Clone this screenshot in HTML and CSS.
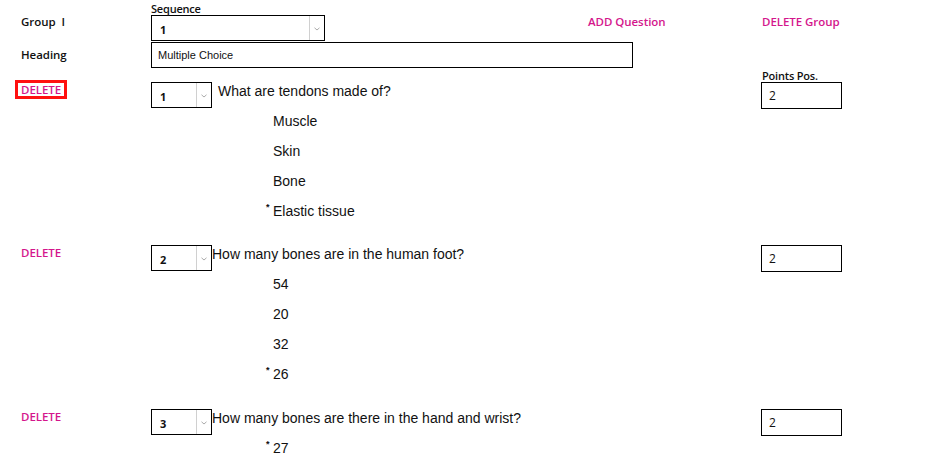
FILE: index.html
```html
<!DOCTYPE html>
<html>
<head>
<meta charset="utf-8">
<link rel="stylesheet" href="styles.css">
</head>
<body>
<div class="page">
  <div class="row row-top">
    <div class="label">Group&nbsp; I</div>
    <div class="seq">
      <div class="small-label">Sequence</div>
      <div class="select select-wide">
        <span class="select-value">1</span>
        <span class="select-arrow"><svg width="6" height="4" viewBox="0 0 6 4"><polyline points="0.5,0.8 3,3 5.5,0.8" fill="none" stroke="#aaa" stroke-width="1"/></svg></span>
      </div>
    </div>
    <div class="label label-col3"><a class="link">ADD Question</a></div>
    <div class="label label-col4"><a class="link">DELETE Group</a></div>
  </div>

  <div class="row row-heading">
    <div class="label">Heading</div>
    <div class="text-input heading-input">Multiple Choice</div>
  </div>

  <div class="row row-points">
    <div class="small-label points-label">Points Pos.</div>
  </div>

  <div class="question q-first">
    <div class="row qhead">
      <div class="del-cell"><a class="del del-focus">DELETE</a></div>
      <div class="qmain">
        <div class="select select-num">
          <span class="select-value">1</span>
          <span class="select-arrow"><svg width="6" height="4" viewBox="0 0 6 4"><polyline points="0.5,0.8 3,3 5.5,0.8" fill="none" stroke="#aaa" stroke-width="1"/></svg></span>
        </div>
        <div class="qtext qtext-gap">What are tendons made of?</div>
      </div>
      <div class="pts-cell"><div class="points-input">2</div></div>
    </div>
    <ul class="answers">
      <li>Muscle</li>
      <li>Skin</li>
      <li>Bone</li>
      <li><span class="mark">*</span>Elastic tissue</li>
    </ul>
  </div>

  <div class="question">
    <div class="row qhead">
      <div class="del-cell"><a class="del">DELETE</a></div>
      <div class="qmain">
        <div class="select select-num">
          <span class="select-value">2</span>
          <span class="select-arrow"><svg width="6" height="4" viewBox="0 0 6 4"><polyline points="0.5,0.8 3,3 5.5,0.8" fill="none" stroke="#aaa" stroke-width="1"/></svg></span>
        </div>
        <div class="qtext">How many bones are in the human foot?</div>
      </div>
      <div class="pts-cell"><div class="points-input">2</div></div>
    </div>
    <ul class="answers">
      <li>54</li>
      <li>20</li>
      <li>32</li>
      <li><span class="mark">*</span>26</li>
    </ul>
  </div>

  <div class="question">
    <div class="row qhead">
      <div class="del-cell"><a class="del">DELETE</a></div>
      <div class="qmain">
        <div class="select select-num">
          <span class="select-value">3</span>
          <span class="select-arrow"><svg width="6" height="4" viewBox="0 0 6 4"><polyline points="0.5,0.8 3,3 5.5,0.8" fill="none" stroke="#aaa" stroke-width="1"/></svg></span>
        </div>
        <div class="qtext">How many bones are there in the hand and wrist?</div>
      </div>
      <div class="pts-cell"><div class="points-input">2</div></div>
    </div>
    <ul class="answers">
      <li><span class="mark">*</span>27</li>
    </ul>
  </div>
</div>
</body>
</html>
```

FILE: styles.css
```css
html, body {
  margin: 0;
  padding: 0;
  background: #fff;
  overflow: hidden;
}

body {
  font-family: "Open Sans", "Liberation Sans", sans-serif;
  color: #111;
}

.page {
  width: 936px;
  height: 460px;
  overflow: hidden;
}

.row {
  display: grid;
  grid-template-columns: 151px 437px 173px 1fr;
  align-items: start;
}

.label {
  padding-left: 21px;
  font-size: 11.5px;
  font-weight: 600;
  line-height: 12px;
  letter-spacing: -0.05px;
}

.label-col3 {
  padding-left: 0;
}

.label-col4 {
  padding-left: 1px;
}

.row-top {
  padding-top: 3px;
}

.row-top > .label {
  margin-top: 13px;
}

.small-label {
  font-size: 11px;
  font-weight: 600;
  line-height: 12px;
  letter-spacing: -0.2px;
}

.link {
  color: #d4168c;
  text-decoration: none;
}

/* Select */
.select {
  box-sizing: border-box;
  height: 26px;
  border: 1px solid #000;
  background: #fff;
  display: flex;
  align-items: stretch;
}

.select-wide {
  width: 174px;
}

.select-num {
  width: 61px;
  flex: none;
}

.select-value {
  flex: 1;
  padding-left: 8px;
  padding-top: 2px;
  display: flex;
  align-items: center;
  font-size: 11px;
  font-weight: 700;
  color: #111;
}

.select-arrow {
  width: 14px;
  border-left: 1px solid #d0d0d0;
  display: flex;
  align-items: center;
  justify-content: center;
  padding-top: 1px;
}

.select-arrow svg {
  display: block;
}

/* Heading input */
.row-heading > .label {
  margin-top: 8px;
}

.text-input {
  box-sizing: border-box;
  height: 26px;
  margin-top: 1px;
  border: 1px solid #000;
  padding-left: 6px;
  display: flex;
  align-items: center;
  font-family: "Liberation Sans", Arial, sans-serif;
  font-size: 11px;
  color: #111;
}

.heading-input {
  grid-column: 2 / span 2;
  width: 482px;
}

/* Points label */
.row-points {
  height: 14px;
}

.points-label {
  grid-column: 4;
  padding-left: 1px;
  margin-top: 2px;
}

/* Questions */
.question {
  margin-bottom: 20px;
}

.q-first {
  margin-bottom: 19px;
}

.qhead {
  height: 24px;
}

.del-cell {
  padding-left: 15px;
  display: flex;
  align-items: flex-start;
}

.del {
  display: block;
  margin-top: -2px;
  padding: 1px 3px 0 3px;
  border: 3px solid transparent;
  color: #d4168c;
  font-size: 11.5px;
  font-weight: 600;
  line-height: 12px;
  letter-spacing: -0.05px;
  text-decoration: none;
}

.del-focus {
  border-color: #ff1010;
}

.qmain {
  grid-column: 2 / span 2;
  display: flex;
  align-items: flex-start;
}

.qtext {
  font-family: "Liberation Sans", Arial, sans-serif;
  font-size: 14px;
  line-height: 18px;
  color: #111;
  white-space: nowrap;
}

.qtext-gap {
  margin-left: 6px;
}

.pts-cell {
  grid-column: 4;
}

.points-input {
  box-sizing: border-box;
  width: 81px;
  height: 27px;
  border: 1px solid #000;
  padding-left: 7px;
  display: flex;
  align-items: center;
  font-size: 12px;
  color: #111;
}

.answers {
  list-style: none;
  margin: 0 0 0 273px;
  padding: 0;
}

.answers li {
  font-family: "Liberation Sans", Arial, sans-serif;
  font-size: 14px;
  line-height: 30px;
  height: 30px;
  color: #111;
}

.mark {
  display: inline-block;
  width: 7px;
  margin-left: -7px;
  font-size: 9px;
  font-weight: 700;
  vertical-align: top;
  line-height: 22px;
}
```
